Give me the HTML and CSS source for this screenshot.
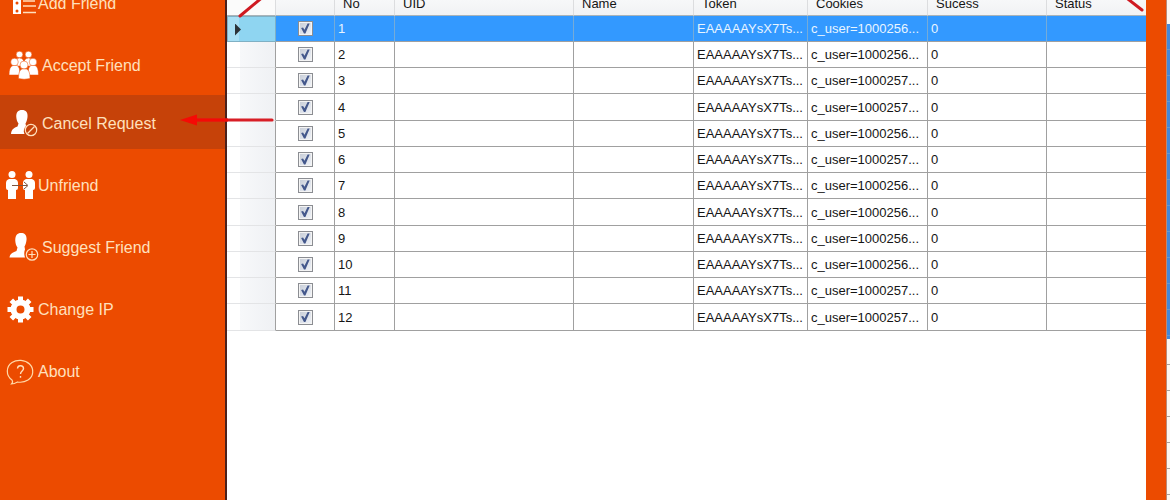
FILE: index.html
```html
<!DOCTYPE html>
<html lang="en">
<head>
<meta charset="utf-8">
<title>Cancel Request</title>
<link rel="stylesheet" href="styles.css">
</head>
<body>
<div class="app">
  <nav class="sidebar">
    <a class="item" href="#add">
      <svg class="icon icon-narrow" viewBox="0 0 38 54"><path fill="#fff" d="M13 14h8v24h-8z"/><g fill="#ec4b00"><circle cx="17" cy="18" r="1.5"/><circle cx="17" cy="27" r="1.5"/><circle cx="17" cy="35" r="1.5"/></g><path stroke="#ffe0bd" stroke-width="1.3" d="M23 25h12M23 30h13M23 36.500h13M23 18h13"/></svg>
      <span class="label">Add Friend</span>
    </a>
    <a class="item" href="#accept">
      <svg class="icon" viewBox="0 0 42 54"><g fill="#fff" stroke="#ec4b00" stroke-width=".5"><circle cx="19.500" cy="16.500" r="3.300"/><circle cx="28.500" cy="16.500" r="3.300"/><path d="M14.500 28q0-8 5-8t5 8zM23.500 28q0-8 5-8t5 8z"/><circle cx="14.500" cy="24" r="3.800"/><circle cx="33" cy="24" r="3.800"/><path d="M9 37q0-8.500 4-9.500h4q3 1 3 9.500zM28 37q0-8.500 3-9.500h4q3.500 1 3.500 9.500z"/><circle cx="24" cy="27" r="4"/><path d="M18.500 40.500q0-8.500 3.500-9.500h4.500q3.500 1 3.500 9.500-6 1.500-11.500 0z"/></g></svg>
      <span class="label">Accept Friend</span>
    </a>
    <a class="item item-active" href="#cancel" aria-current="page">
      <svg class="icon" viewBox="0 0 42 54"><path fill="#fff" d="M22 15c4 0 6 2.500 5.500 7-.3 3-1 5-2 6.500l.5 2.500c-2 2-3 5-1.500 8H11c.5-5 3-6 6.500-7.500l1-3c-1.500-2-2-4-2.200-6.500-.3-4.500 1.700-7 5.700-7z"/><g fill="none" stroke="#ffe0bd" stroke-width="1.200"><circle cx="31" cy="35" r="5.700"/><path d="M27.500 38.500l7-7"/></g></svg>
      <span class="label">Cancel Request</span>
    </a>
    <a class="item" href="#unfriend">
      <svg class="icon icon-narrow" viewBox="0 0 38 54"><g fill="#fff"><circle cx="12" cy="16.500" r="3.500"/><circle cx="29" cy="16.500" r="3.500"/><path d="M9 21h6q3 1 3 4v5q0 2-2 2v9H8v-9q-2 0-2-2v-5q0-3 3-4zM26 21h6q3 1 3 4v5q0 2-2 2v9h-8v-9q-2 0-2-2v-5q0-3 3-4z"/></g><path d="M18 27.500h6" stroke="#fff" fill="none"/><path d="M12 27.500h15M24 24l4 3.500-4 3.500" fill="none" stroke="#7d5540" stroke-width="1"/></svg>
      <span class="label">Unfriend</span>
    </a>
    <a class="item" href="#suggest">
      <svg class="icon" viewBox="0 0 42 54"><path fill="#fff" d="M21 13c4 0 6 2.500 5.500 7-.3 3-1 5-2 6.500l.5 3c-1 2-1 5 0 8H9.500c.5-4 3-5 7-6.500l1-3.500c-1.500-2-2-4-2.200-6.500-.3-5 1.700-8 5.700-8z"/><g fill="#ec4b00" stroke="#ffe0bd" stroke-width="1.200"><circle cx="32" cy="34.500" r="5.700"/><path d="M32 31v7M28.500 34.500h7"/></g></svg>
      <span class="label">Suggest Friend</span>
    </a>
    <a class="item" href="#ip">
      <svg class="icon icon-narrow" viewBox="0 0 38 54"><circle cx="20.500" cy="27.500" r="7" fill="none" stroke="#fff" stroke-width="6"/><path stroke="#fff" stroke-width="5" d="M20.500 14.500v4M20.500 36.500v4M7.500 27.500h4M29.500 27.500h4M11.300 18.300l3 3M26.700 33.700l3 3M11.300 36.700l3-3M26.700 21.300l3-3"/></svg>
      <span class="label">Change IP</span>
    </a>
    <a class="item" href="#about">
      <svg class="icon icon-narrow" viewBox="0 0 38 54"><path fill="none" stroke="#ffd9a8" stroke-width="1.200" d="M11.500 40c1.500-1.500 1.500-2.500.5-4C5.500 31.500 6 22.500 12 18.500c5-3.300 13-3 17.500 1.500 5 5 4 12.500-1.500 16-3.500 2.200-7.500 2.500-10.500 2-2 1.200-3.500 2-6 2z"/><path fill="none" stroke="#ffe0bd" stroke-width="1.400" d="M17.500 24.500c.3-4 6-3.500 6 0 0 2.500-3 2.500-3 5.500M20.500 32v1.800"/></svg>
      <span class="label">About</span>
    </a>
  </nav>

  <main class="content">
    <table class="grid">
      <colgroup><col class="c-head"><col class="c-check"><col class="c-no"><col class="c-uid"><col class="c-name"><col class="c-token"><col class="c-cookies"><col class="c-sucess"><col></colgroup>
      <thead>
        <tr><th></th><th></th><th>No</th><th>UID</th><th>Name</th><th>Token</th><th>Cookies</th><th>Sucess</th><th>Status</th></tr>
      </thead>
      <tbody>
        <tr class="selected"><th><span class="pointer"></span></th><td><input type="checkbox" aria-label="Row 1" checked></td><td>1</td><td></td><td></td><td>EAAAAAYsX7Ts...</td><td>c_user=1000256...</td><td>0</td><td></td></tr>
        <tr><th></th><td><input type="checkbox" aria-label="Row 2" checked></td><td>2</td><td></td><td></td><td>EAAAAAYsX7Ts...</td><td>c_user=1000256...</td><td>0</td><td></td></tr>
        <tr><th></th><td><input type="checkbox" aria-label="Row 3" checked></td><td>3</td><td></td><td></td><td>EAAAAAYsX7Ts...</td><td>c_user=1000257...</td><td>0</td><td></td></tr>
        <tr><th></th><td><input type="checkbox" aria-label="Row 4" checked></td><td>4</td><td></td><td></td><td>EAAAAAYsX7Ts...</td><td>c_user=1000257...</td><td>0</td><td></td></tr>
        <tr><th></th><td><input type="checkbox" aria-label="Row 5" checked></td><td>5</td><td></td><td></td><td>EAAAAAYsX7Ts...</td><td>c_user=1000256...</td><td>0</td><td></td></tr>
        <tr><th></th><td><input type="checkbox" aria-label="Row 6" checked></td><td>6</td><td></td><td></td><td>EAAAAAYsX7Ts...</td><td>c_user=1000257...</td><td>0</td><td></td></tr>
        <tr><th></th><td><input type="checkbox" aria-label="Row 7" checked></td><td>7</td><td></td><td></td><td>EAAAAAYsX7Ts...</td><td>c_user=1000256...</td><td>0</td><td></td></tr>
        <tr><th></th><td><input type="checkbox" aria-label="Row 8" checked></td><td>8</td><td></td><td></td><td>EAAAAAYsX7Ts...</td><td>c_user=1000256...</td><td>0</td><td></td></tr>
        <tr><th></th><td><input type="checkbox" aria-label="Row 9" checked></td><td>9</td><td></td><td></td><td>EAAAAAYsX7Ts...</td><td>c_user=1000256...</td><td>0</td><td></td></tr>
        <tr><th></th><td><input type="checkbox" aria-label="Row 10" checked></td><td>10</td><td></td><td></td><td>EAAAAAYsX7Ts...</td><td>c_user=1000256...</td><td>0</td><td></td></tr>
        <tr><th></th><td><input type="checkbox" aria-label="Row 11" checked></td><td>11</td><td></td><td></td><td>EAAAAAYsX7Ts...</td><td>c_user=1000257...</td><td>0</td><td></td></tr>
        <tr><th></th><td><input type="checkbox" aria-label="Row 12" checked></td><td>12</td><td></td><td></td><td>EAAAAAYsX7Ts...</td><td>c_user=1000257...</td><td>0</td><td></td></tr>
      </tbody>
    </table>
    <svg class="mark mark-arrow" viewBox="0 0 94 14"><path d="M14 7h78" stroke="#d81e26" stroke-width="3.200" stroke-linecap="round"/><path d="M14 7h34" stroke="#f50a05" stroke-width="3.200"/><path d="M0 7l17-5.500v11z" fill="#f50a05"/></svg>
    <svg class="mark mark-left" viewBox="0 0 28 20"><path d="M3 16L27-4" stroke="#cf1a22" stroke-width="3" stroke-linecap="round"/></svg>
    <svg class="mark mark-right" viewBox="0 0 20 14"><path d="M-2-4L16 10" stroke="#cf1a22" stroke-width="3" stroke-linecap="round"/></svg>
  </main>

  <div class="frame-edge"></div>
  <div class="behind"><div class="behind-top"></div><div class="behind-selected"></div><div class="behind-rows"></div></div>
</div>
</body>
</html>
```
FILE: styles.css
```css
* { box-sizing: border-box; }

body {
  margin: 0;
  background: #fff;
  font-family: "Liberation Sans", Arial, sans-serif;
}

.app {
  display: flex;
  height: 100vh;
  overflow: hidden;
}

/* Sidebar */
.sidebar {
  flex: none;
  display: flex;
  flex-direction: column;
  gap: 8px;
  width: 227px;
  border-right: 2px solid #4a211c;
  background: #ec4b00;
}

.item {
  flex: none;
  display: flex;
  align-items: center;
  height: 54px;
  color: #ffe0bd;
  font-size: 16px;
  line-height: 20px;
  text-decoration: none;
}

.item:first-child { margin-top: -24px; }

.item-active {
  margin: -5px 0 1px;
  background: #c64209;
}

.label { padding-top: 2px; }
.item-active .label { padding-top: 4px; }

.icon {
  flex: none;
  width: 42px;
  height: 54px;
}

.icon-narrow { width: 38px; }

/* Data grid */
.content {
  position: relative;
  flex: 1;
  min-width: 0;
}

.grid {
  width: 100%;
  table-layout: fixed;
  border-collapse: separate;
  border-spacing: 0;
  color: #151515;
  font-size: 13px;
  line-height: 16px;
}

.c-head { width: 49px; }
.c-check { width: 59px; }
.c-no { width: 60px; }
.c-uid { width: 179px; }
.c-name, .c-cookies { width: 120px; }
.c-token { width: 114px; }
.c-sucess { width: 119px; }

.grid th, .grid td {
  padding: 1px 0 0 3px;
  border-right: 1px solid #a0a0a0;
  border-bottom: 1px solid #a0a0a0;
  font-weight: normal;
  text-align: left;
  white-space: nowrap;
}

.grid thead th {
  height: 16px;
  padding: 0 0 0 8px;
  border-right-color: #dcdddf;
  border-bottom-color: #a9b3b8;
  background: linear-gradient(#f7f8f9, #f1f2f4);
  line-height: 8px;
  vertical-align: top;
}

.grid thead th:first-child { background: #fbfbfb; }

.grid th:last-child, .grid td:last-child { border-right: 0; }

.grid tbody tr { height: 26px; }
.grid tbody tr:nth-child(4n) { height: 27px; }

.grid tbody th {
  border-bottom-color: #e3e4e6;
  background: linear-gradient(90deg, #fff 13px, #f7f8fa 13px, #eff1f4);
}

.grid td:nth-child(2) {
  padding: 0;
  text-align: center;
}

.grid .selected td {
  border-right-color: #75abd8;
  background: #3399ff;
  color: #e9f5ff;
}

.grid .selected th {
  padding-left: 7px;
  border: 1px solid #7fb0c4;
  background: linear-gradient(90deg, #a9e0f5 11px, #8fd5f1 11px);
}

.pointer {
  display: block;
  width: 6px;
  height: 12px;
  background: #2c3338;
  clip-path: polygon(0 0, 100% 50%, 0 100%);
}

.grid input {
  display: block;
  width: 15px;
  height: 15px;
  margin: 0 auto;
  border: 1px solid #8b8d92;
  background: linear-gradient(135deg, #c5cbd6, #f2f5fa);
  box-shadow: inset 0 0 0 1px #f4f4f4;
  appearance: none;
}

.grid input:checked::after {
  display: block;
  width: 13px;
  height: 13px;
  background: #44588c;
  clip-path: polygon(20% 46%, 35% 42%, 46% 60%, 70% 12%, 86% 12%, 53% 88%, 42% 88%);
  content: "";
}

/* Red pointer marks drawn over the window */
.mark {
  position: absolute;
  pointer-events: none;
}

.mark-arrow {
  top: 113px;
  left: -47px;
  width: 94px;
  height: 14px;
}

.mark-left {
  top: 0;
  left: 10px;
  width: 28px;
  height: 20px;
}

.mark-right {
  top: 0;
  right: 0;
  width: 20px;
  height: 14px;
}

/* Window frame and the list showing behind it */
.frame-edge {
  flex: none;
  width: 20px;
  background: #ec4b00;
}

.behind {
  flex: none;
  display: flex;
  flex-direction: column;
  width: 4px;
  border-left: 1px solid #b98a78;
  background: #fdf6ef;
}

.behind-top { height: 24px; }

.behind-selected {
  height: 315px;
  background: repeating-linear-gradient(#4488d8 0 25px, #6799ce 25px 26px);
}

.behind-rows {
  flex: 1;
  background: repeating-linear-gradient(#fdf6ef 0 25px, #a8a19c 25px 26px);
}
```
